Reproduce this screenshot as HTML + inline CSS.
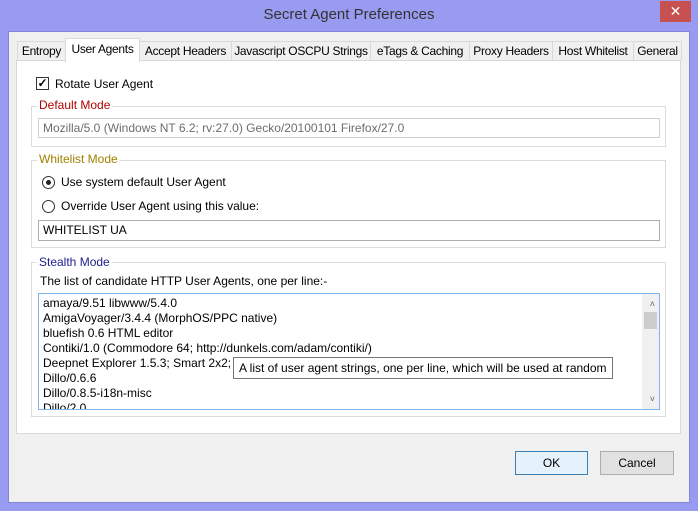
<!DOCTYPE html>
<html><head><style>
*{box-sizing:border-box;margin:0;padding:0}
body{width:698px;height:511px;background:#989bf0;font-family:"Liberation Sans",sans-serif;font-size:12px;color:#000;position:relative;overflow:hidden}
.a{position:absolute}
.client{left:8px;top:31px;width:682px;height:472px;background:#f0f0f0;border:1px solid #8386d8}
.title{left:0;top:6px;width:698px;text-align:center;font-size:15px;color:#333}
.close{left:660px;top:1px;width:31px;height:21px;background:#c75050;color:#fff;text-align:center;font-size:14px;line-height:20px}
.tab{top:41px;height:20px;border:1px solid #d9d9d9;border-bottom:none;background:#f0f0f0;text-align:center;line-height:18px;font-size:12px;letter-spacing:-0.3px}
.sel{top:38px;height:24px;background:#fff;border-color:#d9d9d9;z-index:3;line-height:20px}
.panel{left:16px;top:60px;width:665px;height:374px;background:#fff;border:1px solid #d9d9d9}
.grp{border:1px solid #dcdcdc}
.leg{background:#fff;padding:0 2px}
.box{background:#fff;border:1px solid #abadb3;padding-left:4px}
.radio{width:13px;height:13px;border:1px solid #333;border-radius:50%;background:#fff}
.btn{height:24px;border:1px solid #adadad;background:#e1e1e1;text-align:center;line-height:22px}
</style></head><body>
<div class="a title">Secret Agent Preferences</div>
<div class="a close">✕</div>
<div class="a client"></div>
<div class="a tab" style="left:17px;width:49px">Entropy</div>
<div class="a tab sel" style="left:65px;width:75px">User Agents</div>
<div class="a tab" style="left:139px;width:93px">Accept Headers</div>
<div class="a tab" style="left:231px;width:140px">Javascript OSCPU Strings</div>
<div class="a tab" style="left:370px;width:100px">eTags &amp; Caching</div>
<div class="a tab" style="left:469px;width:84px">Proxy Headers</div>
<div class="a tab" style="left:552px;width:82px">Host Whitelist</div>
<div class="a tab" style="left:633px;width:49px">General</div>
<div class="a panel"></div>

<div class="a" style="left:36px;top:77px;width:13px;height:13px;border:1px solid #333;background:#fff;font-size:12px;line-height:11px;text-align:center;font-weight:bold">✓</div>
<div class="a" style="left:55px;top:77px">Rotate User Agent</div>

<div class="a grp" style="left:31px;top:106px;width:635px;height:41px"></div>
<div class="a leg" style="left:37px;top:98px;color:#b00000">Default Mode</div>
<div class="a box" style="left:38px;top:118px;width:622px;height:20px;line-height:18px;color:#6d6d6d;border-color:#d0d0d0">Mozilla/5.0 (Windows NT 6.2; rv:27.0) Gecko/20100101 Firefox/27.0</div>

<div class="a grp" style="left:31px;top:160px;width:635px;height:88px"></div>
<div class="a leg" style="left:37px;top:152px;color:#a08000">Whitelist Mode</div>
<div class="a radio" style="left:42px;top:176px"><div class="a" style="left:3px;top:3px;width:5px;height:5px;border-radius:50%;background:#222"></div></div>
<div class="a" style="left:61px;top:175px">Use system default User Agent</div>
<div class="a radio" style="left:42px;top:200px"></div>
<div class="a" style="left:61px;top:199px">Override User Agent using this value:</div>
<div class="a box" style="left:38px;top:220px;width:622px;height:21px;line-height:19px">WHITELIST UA</div>

<div class="a grp" style="left:31px;top:262px;width:635px;height:155px"></div>
<div class="a leg" style="left:37px;top:255px;color:#202090">Stealth Mode</div>
<div class="a" style="left:40px;top:274px">The list of candidate HTTP User Agents, one per line:-</div>
<div class="a box" style="left:38px;top:293px;width:622px;height:117px;border-color:#7eb4ea;overflow:hidden;line-height:15px;padding-top:2px">
amaya/9.51 libwww/5.4.0<br>AmigaVoyager/3.4.4 (MorphOS/PPC native)<br>bluefish 0.6 HTML editor<br>Contiki/1.0 (Commodore 64; http://dunkels.com/adam/contiki/)<br>Deepnet Explorer 1.5.3; Smart 2x2; Avant<br>Dillo/0.6.6<br>Dillo/0.8.5-i18n-misc<br>Dillo/2.0
<div class="a" style="right:0;top:0;width:17px;height:115px;background:#f0f0f0"></div>
<div class="a" style="right:2px;top:18px;width:13px;height:17px;background:#cdcdcd"></div>
<div class="a" style="right:4px;top:3px;font-size:9px;color:#606060">˄</div>
<div class="a" style="right:4px;top:98px;font-size:9px;color:#606060">˅</div>
</div>
<div class="a" style="left:233px;top:357px;width:380px;height:22px;border:1px solid #767676;background:#fff;line-height:20px;padding-left:5px;z-index:5">A list of user agent strings, one per line, which will be used at random</div>

<div class="a btn" style="left:515px;top:451px;width:73px;background:#e5f1fb;border-color:#3c7fb1;border-width:1px">OK</div>
<div class="a btn" style="left:600px;top:451px;width:74px">Cancel</div>
</body></html>
